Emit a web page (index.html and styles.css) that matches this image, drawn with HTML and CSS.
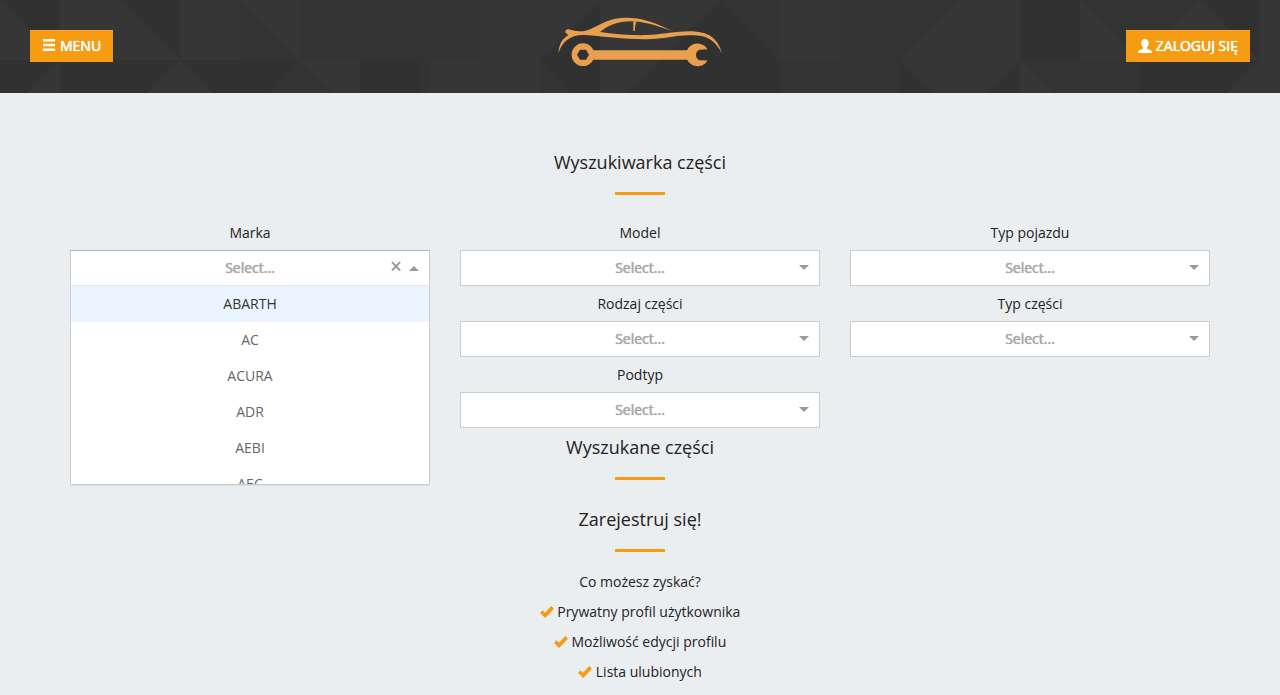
FILE: index.html
```html
<!DOCTYPE html>
<html lang="pl">
<head>
<meta charset="utf-8">
<title>Wyszukiwarka części</title>
<link rel="stylesheet" href="styles.css">
</head>
<body>
<header class="topbar">
  <svg class="topbar-pattern" width="1280" height="93" viewBox="0 0 1280 93" aria-hidden="true">
    <g fill="#363636">
      <path d="M0 0l60 60H0zM60 0h60v60H60zM120 0l60 60h-60zM180 0h60v60h-60zM240 0l60 60V0z"/>
      <path d="M60 60L27 93h33zM180 60l-33 33h66zM300 60h60v33h-27z"/>
      <path d="M180 60l-33 33h33zM480 0h120l-60 60h-60zM600 0h120l-60 60-33 33h-27zM430 60h110v33H430z"/>
      <path d="M780 0h60v60h-60zM960 0v60h-60zM960 0h60v60h-60zM900 60h120l-33 33h-54z"/>
      <path d="M1080 0l60 60h-60zM1200 0l60 60h-120zM1020 60l33 33h-33zM1260 60l-33 33h53V60zM1260 0h20v60h-20z"/>
    </g>
    <g fill="#313131">
      <path d="M0 0h60v60zM120 0h60v60zM0 60h60L27 93H0zM60 60h120l-33 33H60zM180 60h120l-33 33h-54zM360 60h60v33h-60z"/>
      <path d="M600 0v60h-60zM540 60h60v33h-27zM720 0l60 60H660zM660 60h120v33H627z"/>
      <path d="M900 60l33 33h-33zM1020 60v33h-33zM1020 0h60l-60 60zM1080 0v60h-60zM1200 0h60v60zM1140 60h120l-33 33h-87z"/>
    </g>
  </svg>
  <button class="btn" type="button">
    <svg width="14" height="14" viewBox="0 0 14 14" fill="currentColor" aria-hidden="true"><path d="M1 0h12v2.600H1zM1 4.700h12v2.600H1zM1 9.400h12V12H1z"/></svg>
    MENU
  </button>
  <a class="logo" href="#" aria-label="Strona główna">
    <svg width="166" height="52" viewBox="557 16 166 52" fill="#e8a04f" aria-hidden="true">
      <path d="M558.600 53C558.800 45 562 38.500 568.500 35L565.500 32.800C564.800 30 567 28.700 569.500 29.400C574 30.800 578 31.200 583 31.200C592 30.500 603 21 615 18.800C631 15.600 649 19 672.500 31C656 25.500 644 21.500 631 21.300C617 21.500 608 25.500 600 32C617 34.500 633 35.300 646 35.100C660 35 671 31.500 690 31.300C708 31.500 718 38 722 53.500C716 42 709 36.500 697 35.600C677 33.800 668 39.300 645 39.200C622 39.200 604 36.500 585 35.100C570 34.500 562 42 558.600 53Z"/>
      <path d="M633.300 21.500h3.300C635.200 24 635 27 634.800 31h-1.500z"/>
      <path fill-rule="evenodd" d="M583 43.300a11.400 11.400 0 1 1 0 22.800a11.400 11.400 0 0 1 0-22.800zM580 49.800l-3 5 3 5h6l3-5-3-5z"/>
      <path d="M593 50.300H688V59.700H593z"/>
      <path d="M707.500 49.200A11.400 11.400 0 1 0 707.500 60.500L699.500 60.200A5.700 5.700 0 0 1 699.500 49.700Z"/>
    </svg>
  </a>
  <button class="btn" type="button">
    <svg width="14" height="14" viewBox="0 0 14 14" fill="currentColor" aria-hidden="true"><path d="M7 0c2.400 0 3.700 1.700 3.700 4 0 1.800-.7 3.300-1.700 4.200v1.200c0 .5 4.200 1.500 4.800 2.700.2.500.2 1.200.2 1.900H0c0-.7 0-1.400.2-1.900C.8 10.900 5 9.900 5 9.400V8.200C4 7.300 3.300 5.800 3.300 4c0-2.300 1.300-4 3.700-4z"/></svg>
    ZALOGUJ SIĘ
  </button>
</header>

<main class="page">
  <h2 class="title">Wyszukiwarka części</h2>
  <form class="filters">
    <div class="column">
      <label class="field-label" for="marka">Marka</label>
      <div class="picker picker-open">
        <input class="control" id="marka" type="text" placeholder="Select..." role="combobox" aria-expanded="true" aria-controls="marka-list">
        <button class="clear" type="button" aria-label="Wyczyść">×</button>
        <ul class="menu" id="marka-list" role="listbox">
          <li class="option option-focused" role="option" aria-selected="true">ABARTH</li>
          <li class="option" role="option">AC</li>
          <li class="option" role="option">ACURA</li>
          <li class="option" role="option">ADR</li>
          <li class="option" role="option">AEBI</li>
          <li class="option" role="option">AEC</li>
        </ul>
      </div>
    </div>
    <div class="column">
      <label class="field-label" for="model">Model</label>
      <div class="picker"><select class="control" id="model"><option>Select...</option></select></div>
      <label class="field-label" for="rodzaj">Rodzaj części</label>
      <div class="picker"><select class="control" id="rodzaj"><option>Select...</option></select></div>
      <label class="field-label" for="podtyp">Podtyp</label>
      <div class="picker"><select class="control" id="podtyp"><option>Select...</option></select></div>
    </div>
    <div class="column">
      <label class="field-label" for="typ-pojazdu">Typ pojazdu</label>
      <div class="picker"><select class="control" id="typ-pojazdu"><option>Select...</option></select></div>
      <label class="field-label" for="typ-czesci">Typ części</label>
      <div class="picker"><select class="control" id="typ-czesci"><option>Select...</option></select></div>
    </div>
  </form>
  <h2 class="title">Wyszukane części</h2>
  <h2 class="title">Zarejestruj się!</h2>
  <div class="benefits">
    <p class="line">Co możesz zyskać?</p>
    <ul class="list">
      <li class="line"><svg class="check" width="14" height="14" viewBox="0 0 14 14" aria-hidden="true"><path d="M0 8l2.600-2.800L5 7.700 11.200 1 14 3.800 5.200 13z"/></svg> Prywatny profil użytkownika</li>
      <li class="line"><svg class="check" width="14" height="14" viewBox="0 0 14 14" aria-hidden="true"><path d="M0 8l2.600-2.800L5 7.700 11.200 1 14 3.800 5.200 13z"/></svg> Możliwość edycji profilu</li>
      <li class="line"><svg class="check" width="14" height="14" viewBox="0 0 14 14" aria-hidden="true"><path d="M0 8l2.600-2.800L5 7.700 11.200 1 14 3.800 5.200 13z"/></svg> Lista ulubionych</li>
    </ul>
  </div>
</main>
</body>
</html>
```
FILE: styles.css
```css
* { box-sizing: border-box; }

body {
  margin: 0;
  background: #ebeef1;
  color: #222;
  font: 14px/20px "Open Sans", sans-serif;
}

.topbar {
  position: relative;
  display: grid;
  grid-template-columns: 1fr auto 1fr;
  align-items: start;
  padding: 16px 30px 25px;
  background: #333;
  overflow: hidden;
}
.topbar-pattern { position: absolute; top: 0; left: 0; }

.btn {
  position: relative;
  display: flex;
  align-items: center;
  gap: 4px;
  justify-self: start;
  margin-top: 14px;
  padding: 5px 12px 6px;
  border: 0;
  border-top: 1px solid #fba62f;
  background: #f59c13;
  color: #fff;
  font: 400 14px/20px "Open Sans", sans-serif;
  text-shadow: 0 0 0 #fff, 0 0 1px #fff;
}
.btn:last-child { justify-self: end; }

.logo { position: relative; }
.logo svg { display: block; }

.page {
  max-width: 1170px;
  margin: 0 auto;
  padding: 50px 15px 8px;
  text-align: center;
}

.title {
  margin: 0 0 20px;
  padding-top: 9px;
  font-size: 18px;
  font-weight: 400;
  line-height: 20px;
}
.title::after {
  content: "";
  display: block;
  width: 50px;
  height: 3px;
  margin: 20px auto 0;
  background: #f59c13;
}

.filters {
  display: grid;
  grid-template-columns: repeat(3, 1fr);
  gap: 30px;
}
.field-label { display: block; line-height: 35px; }

.picker { position: relative; }
.control {
  display: block;
  width: 100%;
  height: 36px;
  padding: 0 10px;
  border: 1px solid #ccc;
  border-radius: 0;
  background: #fff;
  appearance: none;
  color: #aaa;
  font: 400 14px/34px "Open Sans", sans-serif;
  text-align: center;
  text-align-last: center;
  text-shadow: 0 0 0 #aaa, 0 0 1px #aaa;
}
.control::placeholder { color: #aaa; opacity: 1; }
.picker::after {
  content: "";
  position: absolute;
  top: 15px;
  right: 11px;
  border: 5px solid transparent;
  border-top-color: #999;
  border-bottom: 0;
  pointer-events: none;
}
.picker-open::after {
  top: 16px;
  border: 5px solid transparent;
  border-top: 0;
  border-bottom-color: #999;
}
.picker-open .control {
  padding-bottom: 2px;
  border-color: #b3b3b3 #ccc #e6e6e6;
}
.clear {
  position: absolute;
  top: 6px;
  right: 28px;
  padding: 0;
  border: 0;
  background: none;
  color: #999;
  font: 600 21px/20px "Open Sans", sans-serif;
}
.menu {
  position: absolute;
  z-index: 1;
  top: 36px;
  left: 0;
  width: 100%;
  height: 199px;
  margin: 0;
  padding: 0;
  overflow: hidden;
  border: 1px solid #ccc;
  border-top: 0;
  border-radius: 0 0 2px 2px;
  background: #fff;
  box-shadow: 0 1px 0 rgba(0, 0, 0, 0.06);
  list-style: none;
}
.option { padding: 8px 10px; color: #666; }
.option-focused { background: #ebf5ff; color: #333; }

.benefits { margin-top: -5px; }
.list { margin: 0; padding: 0; list-style: none; }
.line { margin: 0; line-height: 30px; }
.check { vertical-align: -2px; fill: #f59c13; }
```
